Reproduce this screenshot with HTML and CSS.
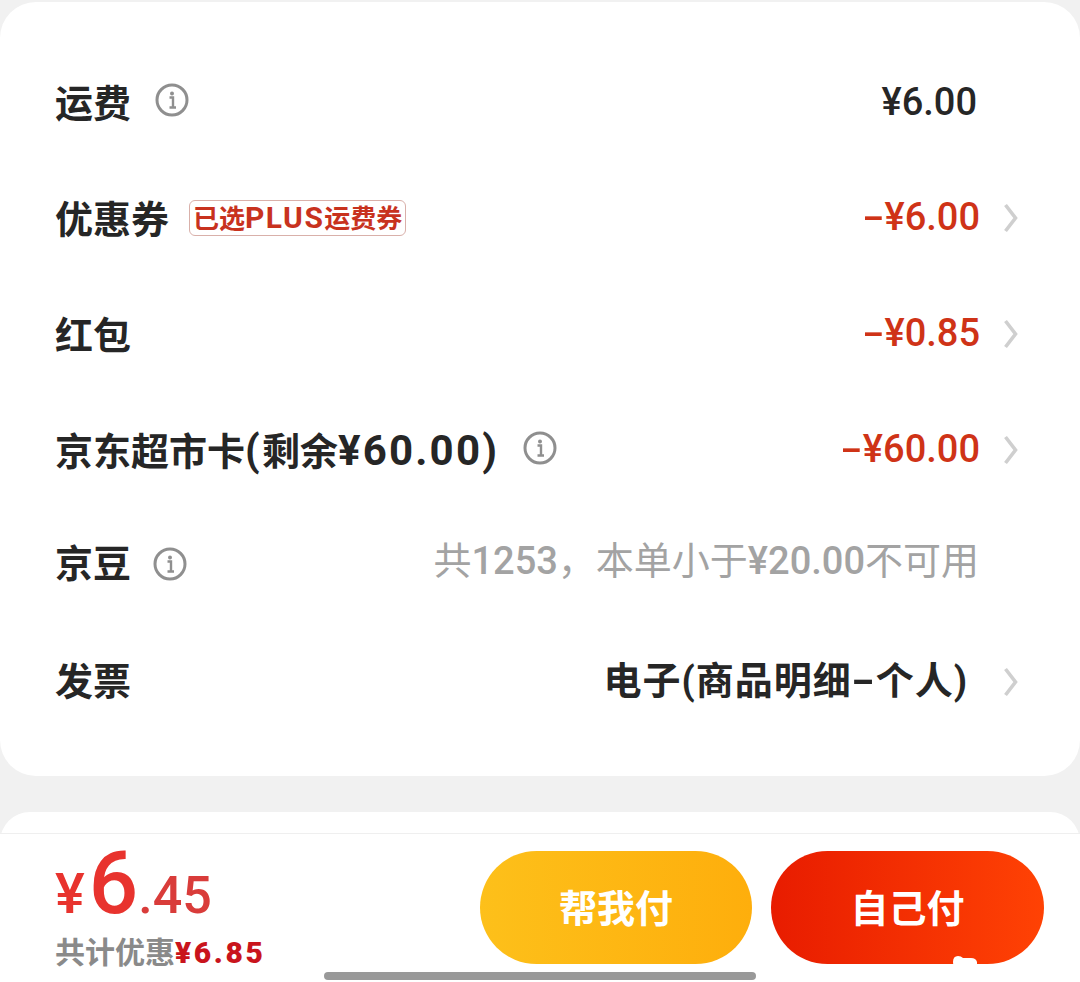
FILE: index.html
```html
<!doctype html>
<html>
<head>
    <title>订单结算</title>
    <meta charset="utf-8">
    <link rel="stylesheet" href="styles.css">
</head><body>
    <svg class="defs" width="0" height="0">
        <symbol id="info" viewBox="0 0 34 34">
            <circle cx="17" cy="17" r="15" fill="none" stroke="#8f8f8f" stroke-width="3"/>
            <circle cx="17" cy="10.5" r="2" fill="#8f8f8f"/>
            <path d="M14.5 14.5h3.5v10M14.5 24.5h6.5" fill="none" stroke="#8f8f8f" stroke-width="2.4"/>
        </symbol>
        <symbol id="arrow" viewBox="0 0 16 30">
            <path d="M2.5 2l10 13-10 13" fill="none" stroke="#cfcfcf" stroke-width="3.6"/>
        </symbol>
    </svg>

    <div class="card">
        <div class="row">
            <span class="label">运费</span>
            <svg class="info"><use href="#info"/></svg>
            <span class="value plain">¥6.00</span>
        </div>
        <div class="row">
            <span class="label">优惠券</span>
            <span class="tag">已选<span class="tag-latin">PLUS</span>运费券</span>
            <span class="value minus"><span class="dash">-</span>¥6.00</span>
            <svg class="arrow"><use href="#arrow"/></svg>
        </div>
        <div class="row">
            <span class="label">红包</span>
            <span class="value minus"><span class="dash">-</span>¥0.85</span>
            <svg class="arrow"><use href="#arrow"/></svg>
        </div>
        <div class="row">
            <span class="label">京东超市卡<span class="label-latin">(</span>剩余<span class="label-latin">¥60.00)</span></span>
            <svg class="info"><use href="#info"/></svg>
            <span class="value minus"><span class="dash">-</span>¥60.00</span>
            <svg class="arrow"><use href="#arrow"/></svg>
        </div>
        <div class="row row-beans">
            <span class="label">京豆</span>
            <svg class="info"><use href="#info"/></svg>
            <span class="value muted">共<b>1253</b>，本单小于<b>¥20.00</b>不可用</span>
        </div>
        <div class="row row-invoice">
            <span class="label">发票</span>
            <span class="value invoice">电子(商品明细<span class="dash">-</span>个人)</span>
            <svg class="arrow"><use href="#arrow"/></svg>
        </div>
    </div>

    <div class="card-next"></div>

    <div class="footer">
        <div class="total">
            <div class="price"><span class="yen">¥</span><span class="big">6</span><span class="cents">.45</span></div>
            <div class="saved">共计优惠<b>¥6.85</b></div>
        </div>
        <div class="buttons">
            <div class="btn help">帮我付</div>
            <div class="btn self">自己付</div>
        </div>
    </div>

    <div class="home-bar"></div>
    <svg class="mark" viewBox="0 0 25 16"><path d="M1 6q0-6 5-6 3 0 5 2h8q5 0 6 4v10H3q-2-5-2-10z" fill="#fff"/></svg>
</body></html>
```

FILE: styles.css
```css
* {
    box-sizing: border-box;
}

body {
    margin: 0;
    padding: 2px 0 0;
    height: 982px;
    overflow: hidden;
    background: #f1f1f1;
    font-family: 'Roboto', 'Noto Sans CJK SC', sans-serif;
    color: #262626;
}

.defs {
    position: absolute;
}

.card {
    height: 774px;
    padding: 42px 61px 36px 55px;
    background: #fff;
    border-radius: 36px;
}

.row {
    display: flex;
    align-items: center;
    height: 116px;
}

.row-beans {
    margin-top: -2px;
    margin-bottom: 2px;
}

.label {
    margin-top: 3px;
    font-size: 38px;
    font-weight: 700;
    line-height: 50px;
    white-space: nowrap;
}

.row-beans .label,
.row-invoice .label {
    margin-top: 0;
}

.label-latin {
    font-size: 42px;
    letter-spacing: 2.2px;
}

.info {
    width: 34px;
    height: 34px;
    margin-left: 24px;
    margin-top: -4px;
}

.row-beans .info {
    margin-left: 22px;
    margin-top: 0;
}

.tag {
    margin-left: 20px;
    margin-top: -1px;
    padding: 0 3px;
    height: 36px;
    line-height: 33px;
    font-size: 26px;
    font-weight: 700;
    color: #c8321e;
    border: 1px solid #d9b0aa;
    border-radius: 6px;
    white-space: nowrap;
}

.tag-latin {
    font-size: 30px;
    letter-spacing: 1.5px;
}

.value {
    margin-left: auto;
    font-size: 38px;
    font-weight: 500;
    line-height: 50px;
    white-space: nowrap;
    margin-top: -3px;
}

.dash {
    display: inline-block;
    margin: 0 5px;
    transform: scaleX(1.7);
}

.plain {
    margin-right: 42px;
    margin-top: 0;
}

.minus {
    color: #cf3317;
}

.muted {
    margin-right: 40px;
    margin-top: -6px;
    font-weight: 400;
    color: #a3a3a3;
}

.muted b {
    font-weight: 500;
}

.invoice {
    font-weight: 700;
    letter-spacing: 1px;
    margin-top: -2px;
}

.invoice .dash {
    margin: 0 4px;
}

.arrow {
    width: 16px;
    height: 30px;
    margin-left: 23px;
}

.invoice + .arrow {
    margin-left: 35px;
}

.card-next {
    height: 60px;
    margin-top: 36px;
    background: #fff;
    border-radius: 36px;
}

.footer {
    position: absolute;
    left: 0;
    right: 0;
    top: 833px;
    height: 149px;
    display: flex;
    justify-content: space-between;
    padding: 17px 36px 0 55px;
    background: #fff;
    border-top: 1px solid #efefef;
}

.price {
    display: flex;
    align-items: baseline;
    height: 72px;
    margin-top: -4px;
    color: #e8332e;
    font-weight: 500;
    line-height: 72px;
}

.yen {
    font-size: 56px;
}

.big {
    font-size: 87px;
    margin-left: 4px;
}

.cents {
    font-size: 52px;
    color: #d93c3a;
}

.saved {
    margin-top: 13px;
    font-size: 30px;
    font-weight: 700;
    line-height: 42px;
    color: #8a8a8a;
    white-space: nowrap;
}

.saved b {
    color: #c9141c;
    letter-spacing: 2.6px;
}

.buttons {
    display: flex;
    gap: 19px;
}

.btn {
    width: 273px;
    height: 113px;
    border-radius: 57px;
    line-height: 116px;
    text-align: center;
    font-size: 38px;
    font-weight: 700;
    color: #fff;
}

.help {
    width: 272px;
    background: linear-gradient(90deg, #fdc01a, #feae0c);
}

.self {
    background: linear-gradient(90deg, #e81c00, #ff4204);
}

.home-bar {
    position: absolute;
    left: 324px;
    top: 972px;
    width: 432px;
    height: 8px;
    border-radius: 4px;
    background: #999;
}

.mark {
    position: absolute;
    left: 952px;
    top: 956px;
    width: 25px;
    height: 16px;
}
```
